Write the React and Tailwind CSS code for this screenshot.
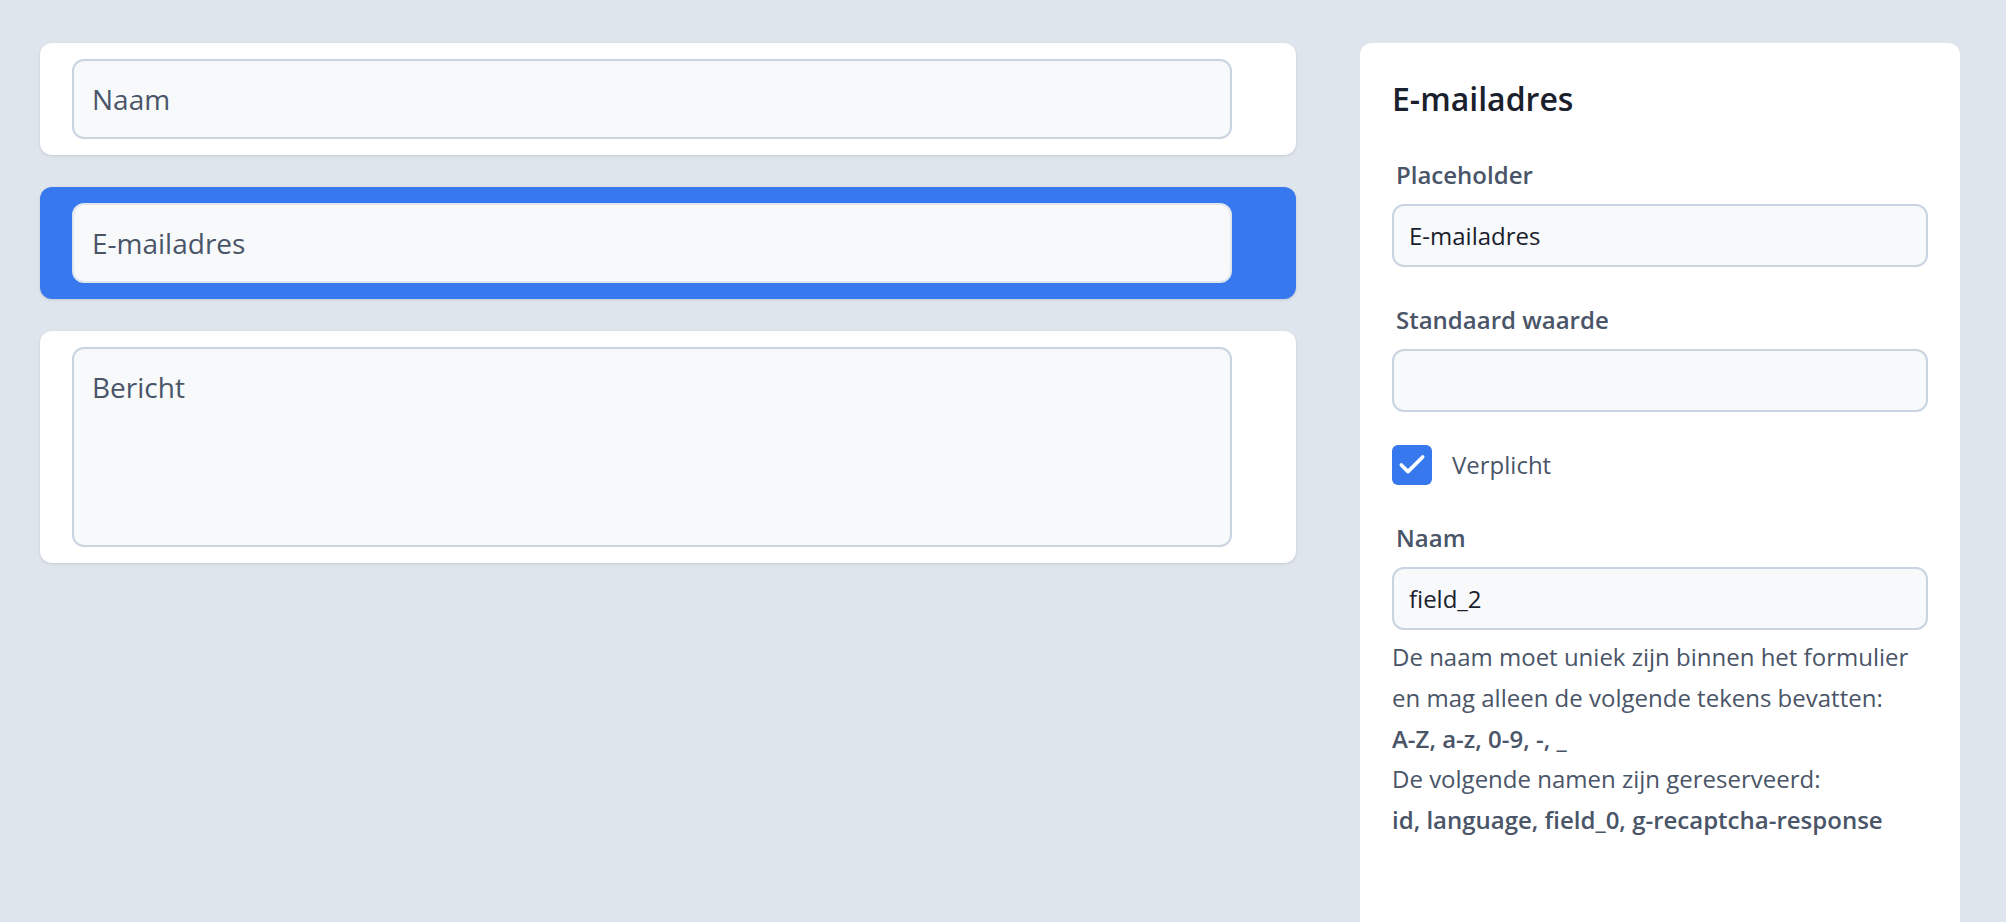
import { Check } from 'lucide-react'

const FONT = { fontFamily: '"Open Sans", "Noto Sans", sans-serif' }

function FieldCard({ label, active, multiline }) {
  return (
    <div
      className={`rounded-xl pl-8 pr-16 py-4 shadow-[0_1px_3px_rgba(0,0,0,0.12)] ${
        active ? 'bg-[#3778ee]' : 'bg-white'
      }`}
    >
      {multiline ? (
        <div className="h-[200px] rounded-xl border-2 border-[#c9d4e0] bg-[#f7f9fb] px-[18px] pt-[17px] text-[28px] leading-[42px] text-[#4a5568]">
          {label}
        </div>
      ) : (
        <div
          className={`flex h-[80px] items-center rounded-xl border-2 bg-[#f7f9fb] px-[18px] text-[28px] text-[#4a5568] ${
            active ? 'border-[#dfe6ee]' : 'border-[#c9d4e0]'
          }`}
        >
          {label}
        </div>
      )}
    </div>
  )
}

function Label({ children, className = '' }) {
  return (
    <div className={`pl-1 text-[24px] leading-[32px] font-semibold text-[#4a5568] ${className}`}>
      {children}
    </div>
  )
}

function Input({ value, className = '' }) {
  return (
    <div
      className={`flex h-[63px] items-center rounded-xl border-2 border-[#c9d4e0] bg-[#f7f9fb] px-[15px] text-[24px] text-[#1a202c] ${className}`}
    >
      {value}
    </div>
  )
}

export default function App() {
  return (
    <div className="min-h-screen overflow-hidden bg-[#dfe5ed]" style={FONT}>
      <div className="flex items-start gap-16 pl-10 pr-[46px] pt-[43px]">
        {/* Form preview */}
        <div className="flex flex-1 flex-col gap-8">
          <FieldCard label="Naam" />
          <FieldCard label="E-mailadres" active />
          <FieldCard label="Bericht" multiline />
        </div>

        {/* Field settings */}
        <div className="min-h-[900px] w-[600px] rounded-t-xl bg-white px-8 pt-[34px]">
          <h2 className="text-[32px] leading-[44px] font-semibold text-[#1a202c]">E-mailadres</h2>

          <Label className="mt-[38px]">Placeholder</Label>
          <Input value="E-mailadres" className="mt-[13px]" />

          <Label className="mt-[37px]">Standaard waarde</Label>
          <Input value="" className="mt-[13px]" />

          <div className="mt-[33px] flex items-center gap-5">
            <span className="flex h-10 w-10 items-center justify-center rounded-md bg-[#3778ee]">
              <Check className="h-8 w-8 text-white" strokeWidth={2.75} />
            </span>
            <span className="text-[24px] text-[#4a5568]">Verplicht</span>
          </div>

          <Label className="mt-[37px]">Naam</Label>
          <Input value="field_2" className="mt-[13px]" />

          <p className="mt-[7px] text-[24px] leading-[1.7] text-[#4a5568]">
            De naam moet uniek zijn binnen het formulier
            <br />
            en mag alleen de volgende tekens bevatten:
            <br />
            <b className="font-semibold">A-Z, a-z, 0-9, -, _</b>
            <br />
            De volgende namen zijn gereserveerd:
            <br />
            <b className="font-semibold">id, language, field_0, g-recaptcha-response</b>
          </p>
        </div>
      </div>
    </div>
  )
}
